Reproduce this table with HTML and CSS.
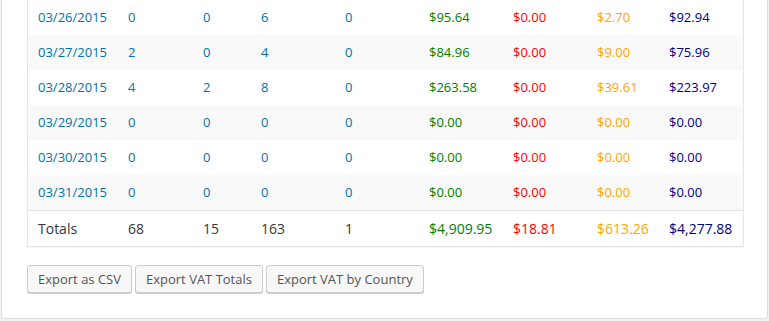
FILE: index.html
```html
<!DOCTYPE html>
<html>
<head>
<meta charset="utf-8">
<link rel="stylesheet" href="styles.css">
</head>
<body>
<div class="panel">
  <table class="report">
    <colgroup>
      <col class="c-date"><col class="c-a"><col class="c-b"><col class="c-c"><col class="c-d">
      <col class="c-m"><col class="c-m"><col class="c-s"><col class="c-m">
    </colgroup>
    <tbody>
      <tr>
        <td><a href="#">03/26/2015</a></td><td><a href="#">0</a></td><td><a href="#">0</a></td><td><a href="#">6</a></td><td><a href="#">0</a></td>
        <td class="green">$95.64</td><td class="red">$0.00</td><td class="orange">$2.70</td><td class="navy">$92.94</td>
      </tr>
      <tr class="alt">
        <td><a href="#">03/27/2015</a></td><td><a href="#">2</a></td><td><a href="#">0</a></td><td><a href="#">4</a></td><td><a href="#">0</a></td>
        <td class="green">$84.96</td><td class="red">$0.00</td><td class="orange">$9.00</td><td class="navy">$75.96</td>
      </tr>
      <tr>
        <td><a href="#">03/28/2015</a></td><td><a href="#">4</a></td><td><a href="#">2</a></td><td><a href="#">8</a></td><td><a href="#">0</a></td>
        <td class="green">$263.58</td><td class="red">$0.00</td><td class="orange">$39.61</td><td class="navy">$223.97</td>
      </tr>
      <tr class="alt">
        <td><a href="#">03/29/2015</a></td><td><a href="#">0</a></td><td><a href="#">0</a></td><td><a href="#">0</a></td><td><a href="#">0</a></td>
        <td class="green">$0.00</td><td class="red">$0.00</td><td class="orange">$0.00</td><td class="navy">$0.00</td>
      </tr>
      <tr>
        <td><a href="#">03/30/2015</a></td><td><a href="#">0</a></td><td><a href="#">0</a></td><td><a href="#">0</a></td><td><a href="#">0</a></td>
        <td class="green">$0.00</td><td class="red">$0.00</td><td class="orange">$0.00</td><td class="navy">$0.00</td>
      </tr>
      <tr class="alt">
        <td><a href="#">03/31/2015</a></td><td><a href="#">0</a></td><td><a href="#">0</a></td><td><a href="#">0</a></td><td><a href="#">0</a></td>
        <td class="green">$0.00</td><td class="red">$0.00</td><td class="orange">$0.00</td><td class="navy">$0.00</td>
      </tr>
    </tbody>
    <tfoot>
      <tr>
        <td>Totals</td><td>68</td><td>15</td><td>163</td><td>1</td>
        <td class="green">$4,909.95</td><td class="red">$18.81</td><td class="orange">$613.26</td><td class="navy">$4,277.88</td>
      </tr>
    </tfoot>
  </table>
  <div class="actions">
    <button class="button">Export as CSV</button>
    <button class="button">Export VAT Totals</button>
    <button class="button">Export VAT by Country</button>
  </div>
</div>
</body>
</html>
```
FILE: styles.css
```css
html, body {
  margin: 0;
  padding: 0;
  background: #f1f1f1;
}
body {
  font-family: "Open Sans", "DejaVu Sans", sans-serif;
  font-size: 13px;
  color: #333;
}
.panel {
  margin: 0 1px 2px 1px;
  background: #fff;
  border: 1px solid #dcdcdc;
  border-top: 0;
  border-radius: 0 0 4px 4px;
  padding: 0 23px 25px 25px;
}
.report {
  width: 717px;
  table-layout: fixed;
  border-collapse: separate;
  border-spacing: 0;
  border: 1px solid #e5e5e5;
  border-top: 0;
  box-shadow: 0 1px 1px rgba(0,0,0,0.04);
  background: #fff;
}
.c-date { width: 90px; }
.c-a { width: 75px; }
.c-b { width: 58px; }
.c-c { width: 84px; }
.c-d { width: 84px; }
.c-m { width: 84px; }
.c-s { width: 72px; }
.report td {
  padding: 8px 10px;
  line-height: 19px;
  white-space: nowrap;
  text-align: left;
  vertical-align: middle;
}
.report tr.alt td {
  background: #f9f9f9;
}
.report tfoot td {
  border-top: 1px solid #e1e1e1;
  color: #32373c;
  font-size: 14px;
}
.report a {
  color: #0073aa;
  text-decoration: none;
}
.green { color: #008000; }
.red { color: #ff0000; }
.orange { color: #ffa500; }
.navy { color: #000080; }
.report tfoot td.green { color: #008000; }
.report tfoot td.red { color: #ff0000; }
.report tfoot td.orange { color: #ffa500; }
.report tfoot td.navy { color: #000080; }
.actions {
  display: flex;
  gap: 3px;
  margin-top: 18px;
}
.button {
  font-family: "Open Sans", "DejaVu Sans", sans-serif;
  font-size: 13px;
  height: 28px;
  line-height: 26px;
  padding: 0 10px 1px;
  color: #555;
  background: #f7f7f7;
  border: 1px solid #ccc;
  border-radius: 3px;
  box-shadow: 0 1px 0 #ccc;
  margin: 0;
  cursor: pointer;
}
```
